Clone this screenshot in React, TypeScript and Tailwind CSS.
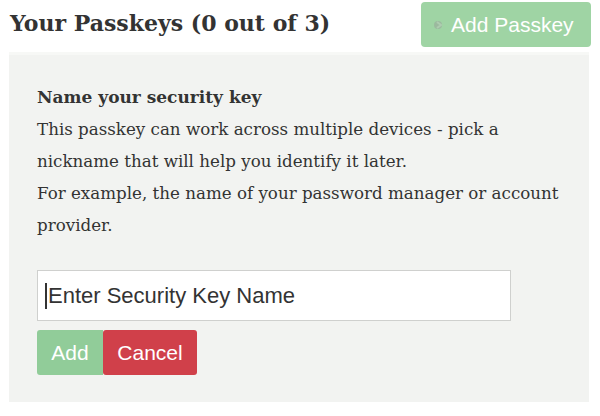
import React from "react";

const serif = "Georgia, 'DejaVu Serif', serif";

export default function App() {
  return (
    <div className="w-[600px] h-[416px] bg-white overflow-hidden text-[#333]">
      <div className="flex items-start justify-between pl-[10px] pr-[9px] pt-[2px]">
        <h2
          className="mt-[6px] text-[22px] leading-[30px] font-bold text-[#333]"
          style={{ fontFamily: serif }}
        >
          Your Passkeys (0 out of 3)
        </h2>
        <button className="flex items-center h-[45px] w-[170px] pl-[13px] rounded-[4px] bg-[#9fd4a4] text-white text-[21px] font-['Liberation_Sans',Arial,sans-serif]">
          <svg width="10" height="12" viewBox="0 0 10 12" className="mr-[7px] opacity-60">
            <circle cx="4" cy="6" r="4" fill="#9aa89b" />
            <path d="M3 3 L7 6 L3 9" stroke="#b8c8b9" strokeWidth="2" fill="none" />
          </svg>
          Add Passkey
        </button>
      </div>
      <div className="mt-[5px] ml-[9px] mr-[11px] h-[350px] bg-[#f2f3f1] border-t-[3px] border-[#f7f8f6] pl-[28px] pt-[26px]">
        <div
          className="text-[16.7px] leading-[32px] text-[#333] whitespace-nowrap"
          style={{ fontFamily: serif }}
        >
          <div className="font-bold text-[17px]">Name your security key</div>
          <div>This passkey can work across multiple devices - pick a</div>
          <div>nickname that will help you identify it later.</div>
          <div>For example, the name of your password manager or account</div>
          <div>provider.</div>
        </div>
        <div className="mt-[29px] flex items-center w-[474px] h-[51px] bg-white border border-[#cfd0ce] pl-[7px] text-[22px] text-[#333] font-['Liberation_Sans',Arial,sans-serif]">
          <span className="inline-block w-[2px] h-[26px] bg-[#333] mr-[1px]" />
          <span>Enter Security Key Name</span>
        </div>
        <div className="mt-[9px] flex font-['Liberation_Sans',Arial,sans-serif] text-[21px] text-white">
          <button className="h-[45px] w-[66px] rounded-l-[3px] bg-[#91cc99]">Add</button>
          <button className="h-[45px] w-[94px] rounded-[3px] bg-[#d0404a]">Cancel</button>
        </div>
      </div>
    </div>
  );
}
